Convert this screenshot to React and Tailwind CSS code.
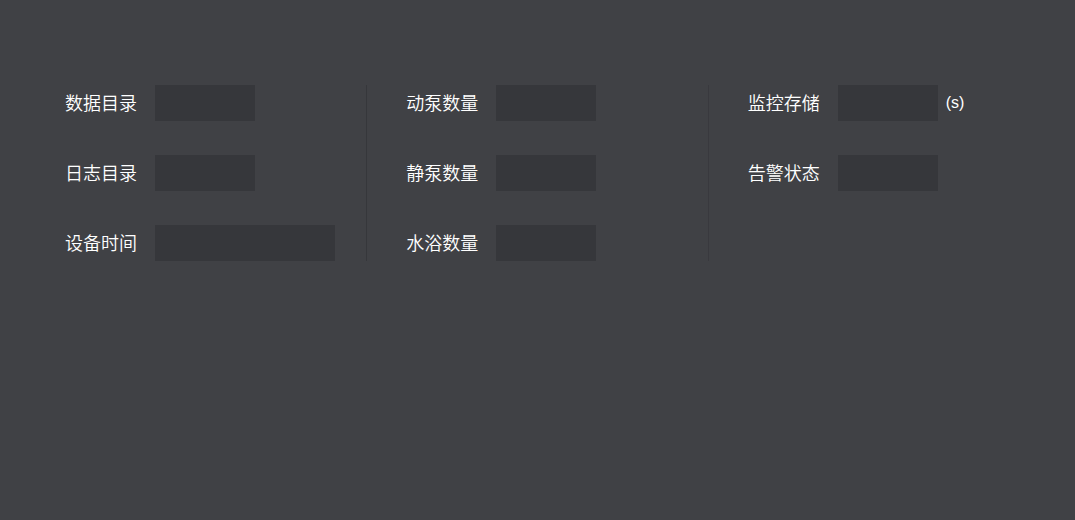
function Field({ id, label, width = "w-[100px]", unit }) {
  return (
    <div className="flex h-9 items-center">
      <label
        htmlFor={id}
        className="mr-[18px] w-[72px] shrink-0 self-start whitespace-nowrap font-['Noto_Sans_CJK_SC',sans-serif] text-lg leading-[34px] font-[350] text-white"
      >
        {label}
      </label>
      <input id={id} type="text" className={`h-9 bg-[#36373b] px-2 text-base text-white outline-none ${width}`} />
      {unit && <span className="ml-2 text-base text-white">{unit}</span>}
    </div>
  );
}

export default function App() {
  return (
    <main className="min-h-screen bg-[#404145] pl-[25px] pr-[26px] pt-[85px] font-['Liberation_Sans','Noto_Sans_CJK_SC',sans-serif]">
      <form className="grid grid-cols-3">
        <section className="flex flex-col gap-[34px] pl-10">
          <Field id="data-dir" label="数据目录" />
          <Field id="log-dir" label="日志目录" />
          <Field id="device-time" label="设备时间" width="w-[180px]" />
        </section>
        <section className="flex flex-col gap-[34px] border-l border-[#36373b] pl-[39px]">
          <Field id="dynamic-pumps" label="动泵数量" />
          <Field id="static-pumps" label="静泵数量" />
          <Field id="baths" label="水浴数量" />
        </section>
        <section className="flex flex-col gap-[34px] border-l border-[#39393e] pl-[39px]">
          <Field id="monitor-storage" label="监控存储" unit="(s)" />
          <Field id="alarm-state" label="告警状态" />
        </section>
      </form>
    </main>
  );
}
